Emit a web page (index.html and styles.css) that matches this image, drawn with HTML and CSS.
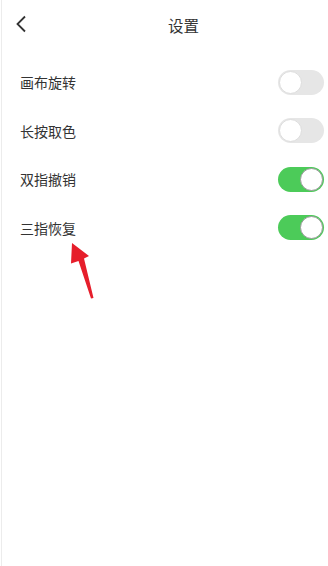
FILE: index.html
```html
<!DOCTYPE html>
<html lang="zh-CN">
<head>
  <meta charset="UTF-8" />
  <meta name="viewport" content="width=device-width, initial-scale=1.0"/>
  <title>设置</title>
  <link rel="stylesheet" href="styles.css">
</head>
<body>
  <div class="page">
    <header class="topbar">
      <span class="back">
        <svg width="12" height="18" viewBox="0 0 12 18"><path d="M10 1.5 L2.5 9 L10 16.5" fill="none" stroke="#333" stroke-width="1.8"/></svg>
      </span>
      <h1>设置</h1>
    </header>

    <div class="list">
      <div class="row">
        <span>画布旋转</span>
        <span class="switch"></span>
      </div>
      <div class="row">
        <span>长按取色</span>
        <span class="switch"></span>
      </div>
      <div class="row">
        <span>双指撤销</span>
        <span class="switch on"></span>
      </div>
      <div class="row">
        <span>三指恢复</span>
        <span class="switch on"></span>
      </div>
    </div>

    <svg class="arrow" width="40" height="70" viewBox="0 0 40 70">
      <path d="M6 3 L23 16 L18 18.5 L27.5 58 L25 58.5 L12.5 21 L5 23.5 Z" fill="#e61e2b"/>
    </svg>
  </div>
</body>
</html>
```

FILE: styles.css
```css
body {
  margin: 0;
  font-family: "Noto Sans CJK SC", "Noto Sans", sans-serif;
  background: #fff;
  color: #333;
}

.page {
  position: relative;
  height: 566px;
  border-left: 1px solid #ececec;
  margin-left: 1px;
  overflow: hidden;
}

.topbar {
  height: 50px;
  display: flex;
  align-items: center;
  position: relative;
}

.back {
  position: absolute;
  left: 13px;
  top: 14px;
}

.topbar h1 {
  margin: 0 0 0 166px;
  font-size: 15.5px;
  font-weight: normal;
  color: #333;
}

.list {
  padding: 8px 4px 0 18px;
}

.row {
  height: 48.5px;
  display: flex;
  align-items: center;
  justify-content: space-between;
  font-size: 14px;
  color: #333;
}

.switch {
  width: 46px;
  height: 25px;
  border-radius: 13px;
  background: #e6e6e6;
  position: relative;
}

.switch::after {
  content: "";
  position: absolute;
  left: 1px;
  top: 1px;
  width: 21px;
  height: 21px;
  border-radius: 50%;
  background: #fff;
  border: 1px solid #ddd;
}

.switch.on {
  background: #4ccb59;
}

.switch.on::after {
  left: auto;
  right: 1px;
  border-color: #9a9a9a;
}

.arrow {
  position: absolute;
  left: 64px;
  top: 240px;
}
```
